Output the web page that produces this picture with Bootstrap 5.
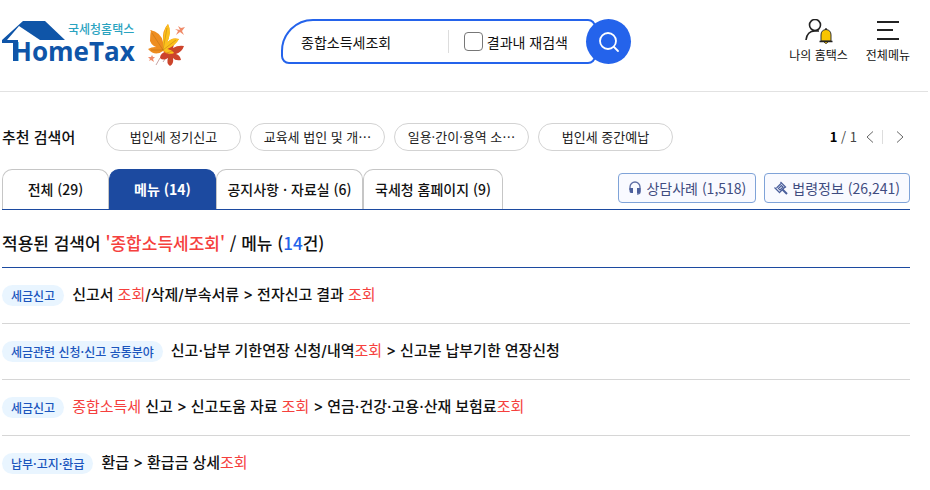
<!DOCTYPE html>
<html lang="ko">
<head>
<meta charset="utf-8">
<meta name="viewport" content="width=device-width, initial-scale=1">
<title>국세청 홈택스</title>
<link rel="stylesheet" href="https://cdn.jsdelivr.net/npm/bootstrap@5.3.0/dist/css/bootstrap.min.css">
<style>
body{font-family:"Noto Sans CJK KR",sans-serif;font-size:15px;line-height:20px;color:#111;background:#fff}
a{color:inherit;text-decoration:none}
.page-wrap{margin-right:2px}
.site-header{height:92px;border-bottom:1px solid #e2e2e2;padding:19px 18px 0 2px}
.logo-area{width:279px}
.logo-ko{font:500 12px "Noto Sans CJK KR",sans-serif}
.logo-en{font:700 26px "Open Sans",sans-serif}
.search-form{width:350px}
.search-box{height:45px;min-width:0;border:2px solid #2463eb;border-radius:32px 8px 8px 8px;padding:0 26px 0 18px}
.search-input{width:0;font-size:14px;color:#111}
.search-input:focus{outline:0}
.search-split{width:1px;height:23px;background:#ddd;margin-right:15px}
.search-box .form-check-input{width:19px;height:19px;margin:0;border:1px solid #777;border-radius:4px}
.search-box label{font-size:14px}
.search-go{width:45px;height:45px;margin-left:-10px;background:#2463eb;color:#fff}
.top-links{gap:18px}
.top-link{font-size:12px;line-height:18px}
.main-area{padding:31px 18px 0 2px}
.suggest-title{font-size:15px;font-weight:500;width:104px}
.pill-list{gap:9px}
.suggest-pill{width:135px;height:28px;border:1px solid #d3d3d3;border-radius:14px;font-size:13px;line-height:26px;text-align:center;color:#222}
.pager{font-size:13px;color:#444;padding-right:6px}
.pager-split{width:1px;height:14px;background:#ddd}
.tab-bar{margin-top:18px;border-bottom:1px solid #1c4aa0}
.tab-bar .nav-link{height:40px;border:1px solid #c6c6c6;border-bottom:0;border-radius:10px 10px 0 0;padding:0;font-size:14px;line-height:39px;text-align:center;color:#111;font-weight:500}
.tab-bar .nav-link.active{background:#1c4aa0;border-color:#1c4aa0;color:#fff;font-weight:700}
.tab-s{width:107px}.tab-m{width:147px}.tab-l{width:140px}
.side-btn{height:30px;border:1px solid #7fa3d8;border-radius:4px;background:#f9faff;color:#3f4c80;font-size:14px;line-height:28px;padding:0 9px}
.result-title{font-size:17px;line-height:26px;font-weight:500;padding:20px 0 11px;border-bottom:1px solid #1c4aa0}
.hit{color:#f5403d}
.num{color:#2463eb}
.result-row{height:56px;border-bottom:1px solid #d6d6d6;font-weight:500}
.result-row a{font-family:Inter,"Noto Sans CJK KR",sans-serif;padding-bottom:1px}
.result-row .hit{font-weight:400}
.tag-pill{background:#e9f5ff;color:#1b55bd;font-size:12px;line-height:21px;border-radius:11px;padding:0 9px;margin:0 8px 0 0}
</style>
<script src="https://cdn.jsdelivr.net/npm/bootstrap@5.3.0/dist/js/bootstrap.bundle.min.js"></script>
</head>
<body>
<div class="page-wrap">
<header class="site-header d-flex align-items-start">
  <a class="logo-area flex-shrink-0" href="#" aria-label="국세청홈택스 HomeTax">
    <svg class="d-block" width="188" height="50" viewBox="0 0 188 50">
      <path d="M21 2H43L63 21H38L17 7 5 21H16V42H11V24H0V21Z" fill="#0f55a8"/>
      <text class="logo-ko" x="66" y="15" fill="#2aa3bf">국세청홈택스</text>
      <text class="logo-en" x="10" y="42" fill="#0f55a8">HomeTax</text>
      <g transform="translate(145 4)">
        <path d="M13 35 9 42M22 30 16 39" stroke="#c9a4a4" fill="none"/>
        <path d="M20 28Q20 22 24 18Q28 20 26 25Q31 22 37 23Q35 29 29 31Q33 32 34 37Q28 38 26 35Q27 41 23 43Q19 40 21 35Q16 38 13 35Q13 30 20 28Z" fill="#cd432c"/>
        <path d="M16 27Q11 18 3 7Q14 9 16 19Q15 7 21 1Q25 9 20 20Q24 14 32 16Q28 23 20 26Q25 27 27 30Q20 33 16 28Q8 34 1 26Q8 22 15 26Q5 24 3 18Q3 12 4 7Q14 14 16 27Z" fill="#ee8d20"/>
        <path d="M16 27Q15 8 21 1Q25 9 20 20Q24 14 32 16Q28 23 20 26Q25 27 27 30Q22 32 16 27Z" fill="#fbc11c"/>
        <path d="M16 27 20 5M16 27 29 17M16 27 5 10M16 27 4 27M20 30 33 25M22 31 23 40" fill="none" stroke="#a86512" stroke-width=".4"/>
        <path d="M33 7 31 3 34 5 38 4 35 8 37 12 33 9 29 12 31 8 28 6ZM4 34 5 32 6 34 8 34 6 36 7 39 4 37 2 38 3 36 1 34Z" fill="#f08a68"/>
      </g>
    </svg>
  </a>
  <form class="search-form d-flex flex-shrink-0" onsubmit="return false">
    <div class="search-box d-flex align-items-center flex-grow-1">
      <input class="search-input border-0 bg-transparent p-0 flex-grow-1" type="text" value="종합소득세조회" aria-label="검색어">
      <span class="search-split"></span>
      <input class="form-check-input flex-shrink-0" type="checkbox" id="again">
      <label class="ms-1 text-nowrap" for="again">결과내 재검색</label>
    </div>
    <button class="search-go btn rounded-circle border-0 p-0 d-flex align-items-center justify-content-center flex-shrink-0" type="submit" aria-label="검색">
      <svg width="22" height="22" viewBox="0 0 22 22" fill="none" stroke="#fff" stroke-width="1.800" stroke-linecap="round"><circle cx="10" cy="10" r="8"/><path d="m16 16 4 4"/></svg>
    </button>
  </form>
  <nav class="top-links d-flex ms-auto text-center">
    <a class="top-link" href="#">
      <svg class="d-block mx-auto" width="30" height="27" viewBox="0 0 30 27"><g fill="none" stroke="#222" stroke-width="1.600"><circle cx="11" cy="6" r="5.500"/><path d="M2 21Q3 12 11 12H15"/></g><path d="M17 22V16Q17 11 22 10.500Q27 11 27 16V22Z" fill="#f8c400" stroke="#333"/><path d="M15.500 22.500H28.500M22 9v2" stroke="#222" stroke-width="1.300"/><path d="M20 23Q22 26 24 23" fill="#f8c400" stroke="#333"/></svg>
      나의 홈택스</a>
    <a class="top-link" href="#">
      <svg class="d-block mx-auto" width="24" height="27" viewBox="0 0 24 27"><path d="M1 3H23M1 11H17M1 20H23" stroke="#222" stroke-width="2"/></svg>
      전체메뉴</a>
  </nav>
</header>
<main class="main-area">
  <div class="d-flex align-items-center">
    <span class="suggest-title">추천 검색어</span>
    <div class="d-flex flex-shrink-0 pill-list">
      <a class="suggest-pill" href="#">법인세 정기신고</a>
      <a class="suggest-pill" href="#">교육세 법인 및 개⋯</a>
      <a class="suggest-pill" href="#">일용·간이·용역 소⋯</a>
      <a class="suggest-pill" href="#">법인세 중간예납</a>
    </div>
    <div class="pager d-flex align-items-center ms-auto">
      <span><b class="text-black">1</b> / 1</span>
      <button class="btn border-0 p-0 ms-2 d-flex" type="button" aria-label="이전"><svg width="9" height="12" viewBox="0 0 9 12" fill="none" stroke="#666"><path d="M8 .5 2 6l6 5.500"/></svg></button>
      <span class="pager-split mx-2"></span>
      <button class="btn border-0 p-0 ms-1 d-flex" type="button" aria-label="다음"><svg width="9" height="12" viewBox="0 0 9 12" fill="none" stroke="#666"><path d="m2 .5 6 5.500-6 5.500"/></svg></button>
    </div>
  </div>
  <div class="tab-bar d-flex align-items-start">
    <nav class="nav flex-nowrap flex-shrink-0">
      <a class="nav-link tab-s" href="#">전체 (29)</a>
      <a class="nav-link tab-s active" href="#" aria-current="page">메뉴 (14)</a>
      <a class="nav-link tab-m" href="#">공지사항 · 자료실 (6)</a>
      <a class="nav-link tab-l" href="#">국세청 홈페이지 (9)</a>
    </nav>
    <div class="d-flex gap-2 ms-auto mt-1 text-nowrap">
      <button class="side-btn d-flex align-items-center gap-1" type="button"><svg width="14" height="14" viewBox="0 0 14 14"><path d="M2 9V6a5 5 0 0 1 10 0v5q0 2-3 2" fill="none" stroke="#5f6fa5" stroke-width="1.300"/><path d="M1.500 7H5v5H3Q1.500 12 1.500 10zM9 7h3.500v3q0 2-1.500 2H9z" fill="#4b5f9c"/></svg>상담사례 (1,518)</button>
      <button class="side-btn d-flex align-items-center gap-1" type="button"><svg width="14" height="14" viewBox="0 0 14 14" fill="none" stroke="#4b5f9c" stroke-width="1.200"><path d="M6.500 1 12 6.500M.5 6.500 6 12M7 2.500 2.500 7M11 6 6 11M7.500 4.500l-3 3 1.500 1.500 3-3z"/><path d="m8.500 8.500 4.500 4.500" stroke-width="2"/></svg>법령정보 (26,241)</button>
    </div>
  </div>
  <h1 class="result-title m-0">적용된 검색어 <span class="hit">'종합소득세조회'</span> / 메뉴 (<span class="num">14</span>건)</h1>
  <div>
    <div class="result-row d-flex align-items-center"><span class="tag-pill">세금신고</span><a href="#">신고서 <span class="hit">조회</span>/삭제/부속서류 &gt; 전자신고 결과 <span class="hit">조회</span></a></div>
    <div class="result-row d-flex align-items-center"><span class="tag-pill">세금관련 신청·신고 공통분야</span><a href="#">신고·납부 기한연장 신청/내역<span class="hit">조회</span> &gt; 신고분 납부기한 연장신청</a></div>
    <div class="result-row d-flex align-items-center"><span class="tag-pill">세금신고</span><a href="#"><span class="hit">종합소득세</span> 신고 &gt; 신고도움 자료 <span class="hit">조회</span> &gt; 연금·건강·고용·산재 보험료<span class="hit">조회</span></a></div>
    <div class="result-row d-flex align-items-center"><span class="tag-pill">납부·고지·환급</span><a href="#">환급 &gt; 환급금 상세<span class="hit">조회</span></a></div>
  </div>
</main>
</div>
</body>
</html>
